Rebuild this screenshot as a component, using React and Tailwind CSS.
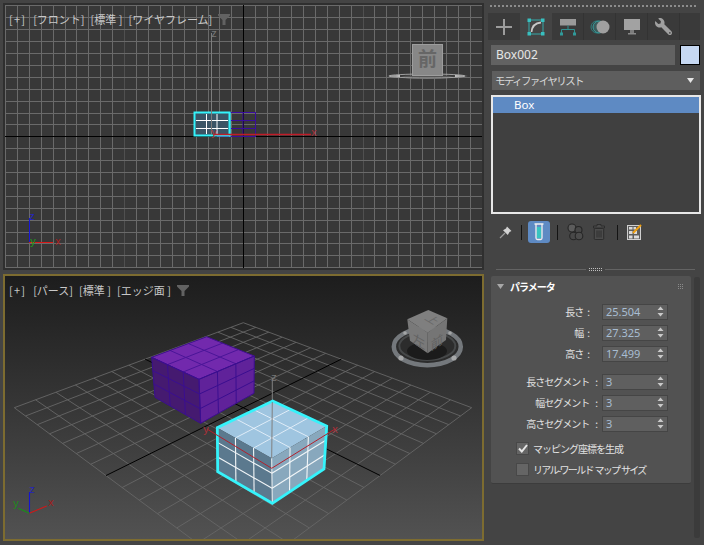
import React from "react";
import { FaWrench } from "react-icons/fa";

const lerp = (a, b, t) => [a[0] + (b[0] - a[0]) * t, a[1] + (b[1] - a[1]) * t];
const pts = (arr) => arr.map((p) => p.join(",")).join(" ");

function homography(F, R, N, L) {
  const dx1 = R[0] - N[0], dx2 = L[0] - N[0], sx = F[0] - R[0] + N[0] - L[0];
  const dy1 = R[1] - N[1], dy2 = L[1] - N[1], sy = F[1] - R[1] + N[1] - L[1];
  const det = dx1 * dy2 - dx2 * dy1;
  const g = (sx * dy2 - dx2 * sy) / det;
  const h = (dx1 * sy - sx * dy1) / det;
  const a = R[0] - F[0] + g * R[0], b = L[0] - F[0] + h * L[0], c = F[0];
  const d = R[1] - F[1] + g * R[1], e = L[1] - F[1] + h * L[1], f = F[1];
  return (u, v) => {
    const w = g * u + h * v + 1;
    return [(a * u + b * v + c) / w, (d * u + e * v + f) / w];
  };
}

function FaceGrid({ q, stroke, width = 1, opacity = 1 }) {
  const [a, b, c, d] = q;
  const lines = [];
  for (const t of [1 / 3, 2 / 3]) {
    lines.push([lerp(a, b, t), lerp(d, c, t)]);
    lines.push([lerp(a, d, t), lerp(b, c, t)]);
  }
  return lines.map((l, i) => (
    <line key={i} x1={l[0][0]} y1={l[0][1]} x2={l[1][0]} y2={l[1][1]} stroke={stroke} strokeWidth={width} opacity={opacity} />
  ));
}

function AxisLabel({ x, y, fill, children }) {
  return (
    <text x={x} y={y} fill={fill} fontSize="11" fontFamily="Liberation Sans, sans-serif" textAnchor="middle">
      {children}
    </text>
  );
}

function FrontScene() {
  const vs = [];
  const hs = [];
  for (let k = -20; k <= 20; k++) vs.push(Math.round(243.3 + k * 11.92) + 0.5);
  for (let k = -11; k <= 11; k++) hs.push(Math.round(136.3 + k * 11.9) + 0.5);
  return (
    <svg className="absolute inset-0 w-full h-full" viewBox="5 5 477 263">
      {vs.map((x, i) => (
        <line key={i} x1={x} x2={x} y1="5" y2="268" stroke={Math.abs(i - 20) === 10 ? "#505050" : "#6a6a6a"} strokeWidth="1" />
      ))}
      {hs.map((y, i) => (
        <line key={i} x1="5" x2="482" y1={y} y2={y} stroke="#6a6a6a" strokeWidth="1" />
      ))}
      <line x1="243.5" x2="243.5" y1="5" y2="268" stroke="#000" />
      <line x1="5" x2="482" y1="136.5" y2="136.5" stroke="#000" />
      <g stroke="#3a0e9c" fill="none" strokeWidth="1">
        <rect x="217.5" y="112.5" width="38" height="24" />
        <line x1="217" x2="255" y1="120.5" y2="120.5" />
        <line x1="217" x2="255" y1="128.5" y2="128.5" />
        <line x1="243" x2="243" y1="112" y2="136" />
      </g>
      <rect x="194.5" y="112.5" width="35" height="23" fill="#3b5566" stroke="#33f3fb" strokeWidth="2" />
      <g stroke="#fff" strokeWidth="1">
        <line x1="206.5" x2="206.5" y1="114" y2="134" />
        <line x1="217" x2="217" y1="114" y2="134" />
        <line x1="196" x2="228" y1="120.5" y2="120.5" />
        <line x1="196" x2="228" y1="128.5" y2="128.5" />
      </g>
      <rect x="229" y="112.5" width="1.5" height="24" fill="#33f3fb" />
      <line x1="211.5" x2="211.5" y1="33" y2="134" stroke="#7c7c7c" />
      <line x1="213" x2="311" y1="134.5" y2="134.5" stroke="#c01c28" strokeWidth="1.3" />
      <AxisLabel x="214" y="37" fill="#777">z</AxisLabel>
      <AxisLabel x="214" y="136" fill="#a8323a">y</AxisLabel>
      <AxisLabel x="314" y="136" fill="#a8323a">x</AxisLabel>
      <ellipse cx="427" cy="77" rx="26" ry="2" fill="#555" />
      <ellipse cx="427" cy="76" rx="38" ry="2" fill="none" stroke="#a0a0a0" strokeWidth="1" />
      <path d="M387 76 L400 75 L400 77 Z M468 76 L455 75 L455 77 Z" fill="#c4c4c4" />
      <rect x="412.5" y="44.5" width="30" height="31" fill="#878787" stroke="#9d9d9d" />
      <text x="427.5" y="66" fontSize="19" fontWeight="700" textAnchor="middle" fill="#666666" fontFamily="Noto Sans CJK JP, sans-serif">前</text>
      <line x1="29.5" x2="29.5" y1="218" y2="242" stroke="#1818d8" />
      <line x1="29" x2="53" y1="242.5" y2="242.5" stroke="#d81818" />
      <AxisLabel x="32" y="220" fill="#2525c0">z</AxisLabel>
      <AxisLabel x="58" y="245" fill="#a82020">x</AxisLabel>
      <AxisLabel x="33" y="245" fill="#1c9c1c">y</AxisLabel>
    </svg>
  );
}

function PerspScene() {
  const H = homography([243.3, 322.7], [471.7, 407.7], [243, 577], [14.3, 407.7]);
  const n = 14;
  const gridLines = [];
  for (let i = 0; i <= n; i++) {
    const t = i / n;
    gridLines.push({ a: H(t, 0), b: H(t, 1), c: i === n / 2 });
    gridLines.push({ a: H(0, t), b: H(1, t), c: i === n / 2 });
  }
  const top = [[206.7, 336.7], [254.3, 356], [199, 379.3], [151.7, 357.3]];
  const pl = [[151.7, 357.3], [199, 379.3], [200.7, 423.3], [155, 397.3]];
  const pr = [[199, 379.3], [254.3, 356], [254, 393.3], [200.7, 423.3]];
  const st = [[272.7, 401], [326.7, 426], [271.7, 458.3], [217.3, 427.7]];
  const sl = [[217.3, 427.7], [271.7, 458.3], [272.3, 503.3], [217.7, 471.7]];
  const sr = [[271.7, 458.3], [326.7, 426], [324, 469], [272.3, 503.3]];
  return (
    <svg className="absolute inset-0 w-full h-full" viewBox="5 276 477 263">
      {gridLines.filter((l) => !l.c).map((l, i) => (
        <line key={i} x1={l.a[0]} y1={l.a[1]} x2={l.b[0]} y2={l.b[1]} stroke="#666666" strokeWidth="0.9" />
      ))}
      {gridLines.filter((l) => l.c).map((l, i) => (
        <line key={i} x1={l.a[0]} y1={l.a[1]} x2={l.b[0]} y2={l.b[1]} stroke="#000" strokeWidth="1" />
      ))}
      <polygon points={pts(top)} fill="#7229ad" />
      <polygon points={pts(pl)} fill="#451a70" />
      <polygon points={pts(pr)} fill="#60229a" />
      <FaceGrid q={top} stroke="#4a1598" />
      <FaceGrid q={pl} stroke="#3a0e90" />
      <FaceGrid q={pr} stroke="#3a0e90" />
      <polygon points={pts(top)} fill="none" stroke="#3f1090" strokeWidth="1" />
      <polygon points={pts(pl)} fill="none" stroke="#3a0e90" strokeWidth="1" />
      <polygon points={pts(pr)} fill="none" stroke="#3a0e90" strokeWidth="1" />

      <line x1="272.3" y1="378" x2="272.3" y2="402" stroke="#808080" />
      <polygon points={pts(st)} fill="#9fc5e0" />
      <polygon points={pts(sl)} fill="#5b798e" />
      <polygon points={pts(sr)} fill="#88a8bd" />
      <FaceGrid q={st} stroke="#f4f9ff" opacity="0.75" />
      <FaceGrid q={sl} stroke="#f2f6f8" width="1.1" />
      <FaceGrid q={sr} stroke="#f2f6f8" width="1.1" />
      <line x1="271.7" y1="458.3" x2="272.3" y2="503.3" stroke="#f2f6f8" />
      <polygon
        points={pts([[272.7, 401], [326.7, 426], [324, 469], [272.3, 503.3], [217.7, 471.7], [217.3, 427.7]])}
        fill="none"
        stroke="#35f3fb"
        strokeWidth="2.8"
      />
      <line x1="272.3" y1="402" x2="271.7" y2="458" stroke="#808080" />
      <polyline points="207,429 271.7,468.3 335,429" fill="none" stroke="#b3202c" strokeWidth="1" />
      <AxisLabel x="274" y="381" fill="#777">z</AxisLabel>
      <AxisLabel x="206" y="433" fill="#a8323a">y</AxisLabel>
      <AxisLabel x="335" y="433" fill="#a8323a">x</AxisLabel>

      <ellipse cx="427.3" cy="346.7" rx="33.5" ry="18.5" fill="#2c2c2c" stroke="#74787c" strokeWidth="4.5" />
      <ellipse cx="427.3" cy="346" rx="28" ry="14" fill="none" stroke="#464849" strokeWidth="2" />
      <ellipse cx="427" cy="351" rx="20" ry="9" fill="#1b1b1b" />
      <g fill="#b8b8b8">
        <circle cx="401" cy="358" r="2.6" opacity="0.75" />
        <circle cx="454" cy="358" r="2.6" opacity="0.75" />
        <circle cx="405" cy="333" r="1.8" opacity="0.7" />
        <circle cx="450" cy="333" r="1.8" opacity="0.7" />
      </g>
      <polygon points="428.3,310 447.3,318.3 427.7,332.7 407.3,319.3" fill="#7f7f7f" />
      <polygon points="407.3,319.3 427.7,332.7 427.7,353.3 410,340.7" fill="#797979" />
      <polygon points="427.7,332.7 447.3,318.3 446,340 427.7,353.3" fill="#757575" />
      <text transform="matrix(0.75 0.45 -0.75 0.45 429 322)" fontSize="13" textAnchor="middle" fill="#686868" fontFamily="Noto Sans CJK JP, sans-serif">上</text>
      <text transform="matrix(0.95 0.55 0 1 419 346)" fontSize="13" textAnchor="middle" fill="#636363" fontFamily="Noto Sans CJK JP, sans-serif">左</text>
      <text transform="matrix(0.95 -0.62 0 1 437 347)" fontSize="13" textAnchor="middle" fill="#636363" fontFamily="Noto Sans CJK JP, sans-serif">前</text>

      <line x1="29.5" x2="29.5" y1="492" y2="513.5" stroke="#1414d0" strokeWidth="1.1" />
      <line x1="29.3" y1="513.3" x2="46.7" y2="506" stroke="#d01818" strokeWidth="1.1" />
      <line x1="29.3" y1="513.3" x2="18.3" y2="508.3" stroke="#189018" strokeWidth="1.1" />
      <AxisLabel x="32" y="493" fill="#2525b8">z</AxisLabel>
      <AxisLabel x="51" y="506" fill="#a02020">x</AxisLabel>
      <AxisLabel x="16" y="507" fill="#1c8c1c">y</AxisLabel>
    </svg>
  );
}

function Funnel() {
  return (
    <svg width="12" height="11" viewBox="0 0 12 11">
      <path d="M0 0 H12 V1.5 L7.5 6 V11 H4.5 V6 L0 1.5 Z" fill="#626262" />
    </svg>
  );
}

function ViewportLabel({ items }) {
  return (
    <div className="absolute left-[4px] top-[6px] flex items-center gap-[6px] text-[11px] leading-[16px] text-[#c8c8c8] whitespace-nowrap font-['Noto_Sans_CJK_JP',sans-serif]">
      <span className="tracking-[1.2px] mr-[1px]">[+]</span>
      {items.map((t) => (
        <span key={t}>{t}</span>
      ))}
      <Funnel />
    </div>
  );
}

function TabIcon({ children, active, first }) {
  return (
    <div
      className={
        "w-[32px] h-full flex items-center justify-center " +
        (active ? "bg-[#444444]" : first ? "" : "border-r border-[#333333]")
      }
    >
      {children}
    </div>
  );
}

const PlusIcon = () => (
  <svg width="18" height="18" viewBox="0 0 18 18"><path d="M8 1h2v7h7v2h-7v7H8v-7H1V8h7z" fill="#9c9c9c" /></svg>
);
const ModifyIcon = () => (
  <svg width="18" height="18" viewBox="0 0 18 18" fill="none">
    <rect x="2" y="2" width="14" height="14" stroke="#35a9a9" strokeWidth="1" />
    <g fill="#38c0c0">
      <rect x="0.5" y="0.5" width="3.5" height="3.5" /><rect x="14" y="0.5" width="3.5" height="3.5" />
      <rect x="0.5" y="14" width="3.5" height="3.5" /><rect x="14" y="14" width="3.5" height="3.5" />
    </g>
    <path d="M4.5 14 C5 8.5 8.5 5 14 4.5" stroke="#c8c8c8" strokeWidth="1.8" />
  </svg>
);
const HierarchyIcon = () => (
  <svg width="18" height="18" viewBox="0 0 18 18" fill="none">
    <rect x="1" y="1" width="16" height="6.5" fill="#9a9a9a" />
    <path d="M9 7.5v4M2.5 15v-3.5h13V15" stroke="#309090" strokeWidth="1" />
    <rect x="1" y="14.5" width="3" height="3" fill="#309a9a" />
    <rect x="14" y="14.5" width="3" height="3" fill="#309a9a" />
  </svg>
);
const MotionIcon = () => (
  <svg width="20" height="14" viewBox="0 0 20 14" fill="none">
    <circle cx="7" cy="7" r="6" stroke="#2f8080" strokeWidth="1" />
    <circle cx="9" cy="7" r="6" fill="#3c5c5c" stroke="#35a0a0" strokeWidth="1" />
    <circle cx="13" cy="7" r="6.5" fill="#a0a0a0" />
  </svg>
);
const DisplayIcon = () => (
  <svg width="18" height="17" viewBox="0 0 18 17">
    <rect x="1" y="1" width="16" height="11" fill="#a2a2a2" />
    <rect x="7" y="12" width="4" height="3" fill="#7d7d7d" />
    <rect x="5" y="15" width="8" height="1.5" fill="#8a8a8a" />
  </svg>
);

function PinIcon() {
  return (
    <svg width="14" height="14" viewBox="0 0 14 14" fill="none">
      <path d="M1 13 L6 8" stroke="#9a9a9a" strokeWidth="1.2" />
      <path d="M8 1.5 L12.5 6 L10.5 7 L8.8 10 L4 5.2 L7 3.5 Z" fill="#d2d2d2" />
    </svg>
  );
}
function TubeIcon() {
  return (
    <svg width="10" height="18" viewBox="0 0 10 18" fill="none">
      <rect x="2.6" y="4" width="4.8" height="11" fill="#38c4c0" />
      <path d="M0.5 1 H9.5 M2 1 V15 a1.5 1.5 0 0 0 1.5 1.5 h3 a1.5 1.5 0 0 0 1.5 -1.5 V1" stroke="#f0f0f0" strokeWidth="1.3" />
    </svg>
  );
}
function SpheresIcon() {
  return (
    <svg width="17" height="18" viewBox="0 0 17 18" fill="none" stroke="#262626" strokeWidth="1.1">
      <circle cx="5" cy="5" r="4" fill="#5c5c5c" />
      <circle cx="11.5" cy="7" r="3.5" fill="#484848" />
      <circle cx="6.5" cy="13" r="3.8" fill="#484848" />
      <circle cx="12" cy="13" r="3.8" fill="#4c4c4c" />
    </svg>
  );
}
function TrashIcon() {
  return (
    <svg width="12" height="16" viewBox="0 0 12 16" fill="#4c4c4c" stroke="#2a2a2a" strokeWidth="0.9">
      <path d="M4 0.5 h4 v1.5 h3.5 v2 h-11 v-2 H4 z" />
      <rect x="1.3" y="4.5" width="9.4" height="11" rx="1" />
      <path d="M4 6.5v7M6 6.5v7M8 6.5v7" fill="none" />
    </svg>
  );
}
function ConfigIcon() {
  return (
    <svg width="16" height="16" viewBox="0 0 16 16" fill="none">
      <rect x="0.5" y="1.5" width="13" height="14" fill="#5d5d5d" stroke="#cfcfcf" />
      <g fill="#d9d9d9">
        <rect x="2" y="3" width="3.5" height="2.5" /><rect x="6.5" y="3" width="2.5" height="2.5" />
        <rect x="2" y="7" width="3.5" height="3" /><rect x="7" y="7" width="3" height="3" />
        <rect x="2" y="11.5" width="3.5" height="3" /><rect x="7" y="11.5" width="5" height="3" />
      </g>
      <path d="M6 9 L14 1" stroke="#f0a010" strokeWidth="2" />
    </svg>
  );
}

function Sep() {
  return <div className="w-px h-[15px] bg-[#141414]" />;
}

function Spinner({ value }) {
  return (
    <div className="w-[66px] h-[16px] bg-[#5f5f5f] border border-[#454545] flex items-center pl-[3px] pr-[3px] justify-between">
      <span className="text-[11px] leading-none text-[#a8bdd2] font-['Noto_Sans',sans-serif]">{value}</span>
      <svg width="7" height="11" viewBox="0 0 7 11" fill="#c9c9c9">
        <path d="M3.5 0.5 L6.5 4 H0.5 Z M3.5 10.5 L6.5 7 H0.5 Z" />
      </svg>
    </div>
  );
}

function Row({ label, value, seg }) {
  return (
    <div className="h-[21px] flex items-center pl-[2px]">
      <div
        className={
          "w-[109px] flex justify-end text-[10px] tracking-[-1px] text-[#e2e2e2] whitespace-nowrap font-['Noto_Sans_CJK_JP',sans-serif] " +
          (seg ? "pr-[5px] gap-[6px]" : "pr-[13px] gap-[4px]")
        }
      >
        <span>{label}</span>
        <span>:</span>
      </div>
      <Spinner value={value} />
    </div>
  );
}

function Check({ label, checked, tight }) {
  return (
    <div className="h-[21px] flex items-center gap-[4px] pl-[25px] text-[10px] text-[#e2e2e2] whitespace-pre font-['Noto_Sans_CJK_JP',sans-serif]">
      <div className="w-[13px] h-[13px] bg-[#656565] border border-[#484848] flex items-center justify-center">
        {checked && (
          <svg width="10" height="9" viewBox="0 0 10 9" fill="none">
            <path d="M1 4.5 L3.8 7.5 L9 1" stroke="#e6e6e6" strokeWidth="2" />
          </svg>
        )}
      </div>
      <span className={tight ? "tracking-[-1.7px]" : "tracking-[-1px]"}>{label}</span>
    </div>
  );
}

export default function App() {
  return (
    <div className="w-[704px] h-[545px] bg-[#444444] flex overflow-hidden font-['Noto_Sans_CJK_JP',sans-serif]">
      <div className="w-[484px] shrink-0 pl-[3px] pt-[3px] flex flex-col gap-[4px]">
        <div className="relative h-[267px] border-2 border-[#2f2f2f] bg-[#383838] overflow-hidden">
          <FrontScene />
          <ViewportLabel items={["[フロント]", "[標準 ]", "[ワイヤフレーム]"]} />
        </div>
        <div className="relative h-[267px] border-2 border-[#7d6c30] bg-linear-to-b from-[#1d1d1d] to-[#525252] overflow-hidden">
          <PerspScene />
          <ViewportLabel items={["[パース]", "[標準 ]", "[エッジ面 ]"]} />
        </div>
      </div>

      <div className="ml-[4px] w-[212px] shrink-0 flex flex-col pt-[5px]">
        <div className="h-[2px] ml-[2px] mr-[4px] border-t-2 border-dotted border-[#8c8c8c]" />
        <div className="mt-[6px] h-[27px] bg-[#3a3a3a] flex">
          <TabIcon first><PlusIcon /></TabIcon>
          <TabIcon active><ModifyIcon /></TabIcon>
          <TabIcon><HierarchyIcon /></TabIcon>
          <TabIcon><MotionIcon /></TabIcon>
          <TabIcon><DisplayIcon /></TabIcon>
          <TabIcon><FaWrench className="-scale-x-100 text-[#a0a0a0]" size={17} /></TabIcon>
        </div>

        <div className="mt-[5px] ml-[3px] flex gap-[5px] h-[20px]">
          <div className="w-[184px] bg-[#626262] flex items-center pl-[5px] text-[12px] text-[#e6e6e6] font-['Noto_Sans',sans-serif]">
            Box002
          </div>
          <div className="w-[20px] bg-[#c6d8f2] border border-black" />
        </div>

        <div className="mt-[6px] ml-[4px] w-[208px] h-[19px] bg-[#5e5e5e] flex items-center justify-between pl-[3px] pr-[6px] text-[10.5px] tracking-[-1.6px] text-[#d8d8d8]">
          <span>モディファイヤリスト</span>
          <svg width="7" height="5" viewBox="0 0 7 5"><path d="M0 0 H7 L3.5 5 Z" fill="#e6e6e6" /></svg>
        </div>

        <div className="mt-[5px] ml-[3px] w-[210px] h-[119px] border-2 border-[#e8e8e8] bg-[#404040]">
          <div className="h-[16px] bg-[#5e8ac3] flex items-center pl-[21px] text-[11.5px] text-white font-['Noto_Sans',sans-serif]">
            Box
          </div>
        </div>

        <div className="mt-[7px] h-[22px] flex items-center">
          <div className="w-[33.5px] flex justify-center pl-[2px] -mr-[1px]"><PinIcon /></div>
          <Sep />
          <div className="ml-[6px] w-[22px] h-[22px] rounded-[3px] bg-[#5e8ac3] flex items-center justify-center"><TubeIcon /></div>
          <div className="ml-[7px]"><Sep /></div>
          <div className="ml-[9px] w-[17px] flex justify-center"><SpheresIcon /></div>
          <div className="ml-[9px] w-[12px] flex justify-center"><TrashIcon /></div>
          <div className="ml-[12px]"><Sep /></div>
          <div className="ml-[9px]"><ConfigIcon /></div>
        </div>

        <div className="mt-[20px] ml-[8px] mr-[5px] h-[12px] flex items-center gap-[3px]">
          <div className="flex-1 h-px bg-[#636363]" />
          <div className="w-[13px] h-[3px] border-y border-dotted border-[#c0c0c0]" />
          <div className="flex-1 h-px bg-[#636363]" />
        </div>

        <div className="mt-[1px] flex flex-1 min-h-0 pb-[7px]">
          <div className="ml-[3px] w-[201px] h-[208px] bg-[#525252] rounded-[2px] border-b border-[#3c3c3c]">
            <div className="h-[19px] flex items-center pt-[1px]">
              <svg className="ml-[6px]" width="7" height="5" viewBox="0 0 7 5"><path d="M0 0 H7 L3.5 5 Z" fill="#a8a8a8" /></svg>
              <span className="ml-[6px] text-[10px] tracking-[-1px] font-bold text-white">パラメータ</span>
              <div className="ml-auto mr-[8px] grid grid-cols-3 gap-px">
                {[0, 1, 2, 3, 4, 5, 6, 7, 8].map((i) => (
                  <div key={i} className="w-px h-px bg-[#8a8a8a]" />
                ))}
              </div>
            </div>
            <div className="pt-[6px]">
              <Row label="長さ" value="25.504" />
              <Row label="幅" value="27.325" />
              <Row label="高さ" value="17.499" />
              <div className="h-[7px]" />
              <Row seg label="長さセグメント" value="3" />
              <Row seg label="幅セグメント" value="3" />
              <Row seg label="高さセグメント" value="3" />
              <div className="h-[4px]" />
              <Check label="マッピング座標を生成" checked />
              <Check tight label="リアル-ワールド   マップ   サイズ" />
            </div>
          </div>
          <div className="ml-[3px] w-[6px] bg-[#3b3b3b] rounded-[2px] mt-[1px]" />
        </div>
      </div>
    </div>
  );
}
